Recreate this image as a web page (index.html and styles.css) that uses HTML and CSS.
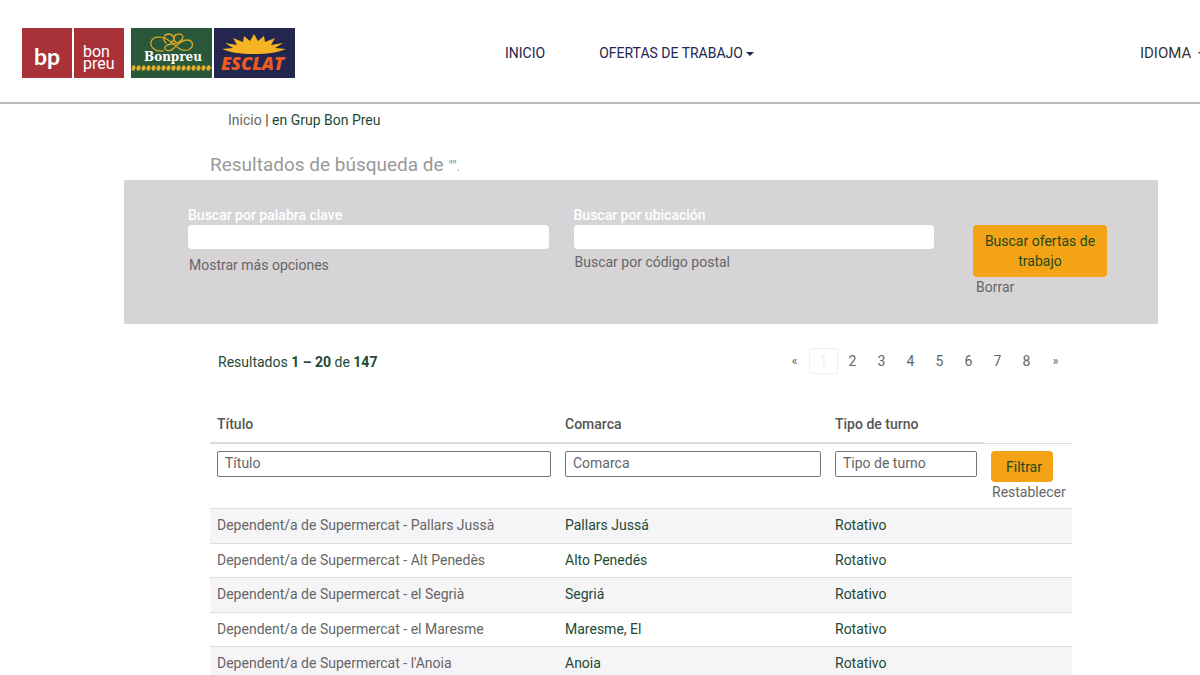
FILE: index.html
```html
<!DOCTYPE html>
<html lang="es">
<head>
<meta charset="utf-8">
<meta name="viewport" content="width=device-width, initial-scale=1">
<title>Ofertas de trabajo - Grup Bon Preu</title>
<link rel="stylesheet" href="styles.css">
</head>
<body>
<header class="site-header">
  <a class="brand" href="#" aria-label="Grup Bon Preu">
    <svg width="274" height="52" viewBox="0 0 274 52" role="img" aria-label="bon preu, Bonpreu, Esclat">
      <rect x="1" y="1" width="50" height="50" fill="#a93239"/>
      <rect x="53" y="1" width="50" height="50" fill="#a93239"/>
      <text class="logo-bp" x="13" y="38">bp</text>
      <text class="logo-name" x="62" y="30">bon</text>
      <text class="logo-name" x="62" y="42">preu</text>
      <rect x="110" y="1" width="81" height="50" fill="#28573a"/>
      <g fill="none" stroke="#d9a429" stroke-width="1.3" stroke-linecap="round">
        <path d="M142 24C134 25 129 20 130 15C132 8 143 9 150 15C156 20 161 25 167 23C174 20 172 13 166 13C160 13 156 18 153 21C150 25 142 24 144 20C146 16 153 18 158 15C165 11 161 6 157 7C152 8 152 14 155 15"/>
        <path d="M145 16C141 12 143 7 148 7C154 8 154 14 150 15"/>
      </g>
      <text class="logo-bonpreu" x="123" y="34">Bonpreu</text>
      <path d="M111 41H191" stroke="#e0a82a" stroke-width="1"/>
      <path d="M113 38.500l-1 5M118 38.500l-1 5M123 38.500l-1 5M128 38.500l-1 5M133 38.500l-1 5M138 38.500l-1 5M143 38.500l-1 5M148 38.500l-1 5M153 38.500l-1 5M158 38.500l-1 5M163 38.500l-1 5M168 38.500l-1 5M173 38.500l-1 5M178 38.500l-1 5M183 38.500l-1 5M188 38.500l-1 5" stroke="#e9b22e" stroke-width="3"/>
      <rect x="193" y="1" width="81" height="50" fill="#23264f"/>
      <path d="M201 22L212 21L204 16L216 18L212 11L222 15L223 9L229 14L233 7L237 14L243 9L244 15L254 11L250 18L262 16L254 21L265 22C258 25 248 27 233 27C218 27 208 25 201 22Z" fill="#f6b323"/>
      <text class="logo-esclat" x="200" y="43">ESCLAT</text>
    </svg>
  </a>
  <nav class="main-nav">
    <a href="#">INICIO</a>
    <a href="#">OFERTAS DE TRABAJO <span class="caret"></span></a>
  </nav>
  <a class="language" href="#">IDIOMA <span class="caret"></span></a>
</header>

<main class="page">
  <div class="intro">
    <p class="breadcrumb"><a href="#">Inicio</a> | en Grup Bon Preu</p>
    <h1 class="title">Resultados de búsqueda de <span class="query">"".</span></h1>
  </div>

  <form class="search">
    <div class="field">
      <label for="keyword">Buscar por palabra clave</label>
      <input id="keyword" type="text">
      <a class="more" href="#">Mostrar más opciones</a>
    </div>
    <div class="field">
      <label for="location">Buscar por ubicación</label>
      <input id="location" type="text">
      <a href="#">Buscar por código postal</a>
    </div>
    <div class="actions">
      <button class="button" type="button">Buscar ofertas de trabajo</button>
      <a href="#">Borrar</a>
    </div>
  </form>

  <section class="results">
    <div class="summary">
      <p class="count">Resultados <b>1 – 20</b> de <b>147</b></p>
      <nav class="pagination" aria-label="Páginas">
        <a class="arrow" href="#">«</a>
        <a class="current" href="#">1</a>
        <a href="#">2</a>
        <a href="#">3</a>
        <a href="#">4</a>
        <a href="#">5</a>
        <a href="#">6</a>
        <a href="#">7</a>
        <a href="#">8</a>
        <a class="arrow" href="#">»</a>
      </nav>
    </div>
    <table class="jobs">
      <colgroup><col class="col-title"><col class="col-region"><col class="col-shift"><col class="col-action"></colgroup>
      <thead>
        <tr class="heads"><th scope="col">Título</th><th scope="col">Comarca</th><th scope="col">Tipo de turno</th><td></td></tr>
        <tr class="filters">
          <td><input type="text" placeholder="Título" aria-label="Título"></td>
          <td><input type="text" placeholder="Comarca" aria-label="Comarca"></td>
          <td><input type="text" placeholder="Tipo de turno" aria-label="Tipo de turno"></td>
          <td><button class="button filter-button" type="button">Filtrar</button><a class="reset" href="#">Restablecer</a></td>
        </tr>
      </thead>
      <tbody>
        <tr><td><a href="#">Dependent/a de Supermercat - Pallars Jussà</a></td><td>Pallars Jussá</td><td>Rotativo</td><td></td></tr>
        <tr><td><a href="#">Dependent/a de Supermercat - Alt Penedès</a></td><td>Alto Penedés</td><td>Rotativo</td><td></td></tr>
        <tr><td><a href="#">Dependent/a de Supermercat - el Segrià</a></td><td>Segriá</td><td>Rotativo</td><td></td></tr>
        <tr><td><a href="#">Dependent/a de Supermercat - el Maresme</a></td><td>Maresme, El</td><td>Rotativo</td><td></td></tr>
        <tr><td><a href="#">Dependent/a de Supermercat - l'Anoia</a></td><td>Anoia</td><td>Rotativo</td><td></td></tr>
      </tbody>
    </table>
  </section>
</main>
</body>
</html>
```

FILE: styles.css
```css
* { box-sizing: border-box; }
body {
  margin: 0;
  background: #fff;
  color: #1c4a35;
  font: 14px/20px Roboto, "Liberation Sans", sans-serif;
  overflow-x: hidden;
}
a { color: #666; text-decoration: none; }
p, h1 { margin: 0; font-weight: 400; }
input, button { font: inherit; }

.site-header {
  display: flex;
  align-items: center;
  height: 104px;
  padding-left: 21px;
  border-bottom: 2px solid #bbb;
  overflow: hidden;
}
.brand { flex: none; height: 52px; margin-top: 4px; }
.brand svg { display: block; }
.main-nav { display: flex; gap: 54px; margin-left: 210px; margin-top: 4px; }
.main-nav a { color: #23264f; white-space: nowrap; }
.language {
  margin: 4px -6px 0 auto;
  color: #333;
  font-size: 15px;
  white-space: nowrap;
}
.caret {
  display: inline-block;
  border: 4px solid transparent;
  border-top-color: currentColor;
  border-bottom: 0;
  vertical-align: middle;
}
.language .caret { margin-left: 3px; }

.logo-bp { font: 700 23px Lato, sans-serif; fill: #fff; }
.logo-name { font: 400 16px Roboto, sans-serif; fill: #fff; }
.logo-bonpreu { font: 700 12px "DejaVu Serif", serif; fill: #fff; }
.logo-esclat { font: italic 800 18px "Open Sans", sans-serif; fill: #ee5a24; }

.page { padding: 0 42px 0 124px; }
.intro { padding: 6px 86px 0; }
.breadcrumb { padding-left: 18px; }
.title { margin-top: 22px; font-size: 19px; line-height: 26px; color: #999; }
.query { font-size: 14px; }

.search {
  display: flex;
  min-height: 144px;
  margin-top: 1px;
  padding: 25px 51px 25px 64px;
  background: #d6d4d7;
}
.field { flex: 1; margin-right: 25px; }
.field + .field { margin-right: 39px; }
.field label { display: block; color: #fff; font-weight: 500; }
.field input {
  display: block;
  width: 100%;
  height: 24px;
  margin-bottom: 3px;
  padding: 0 8px;
  border: 0;
  border-radius: 4px;
  background: #fff;
}
.field a { padding-left: 1px; }
.field .more { display: inline-block; margin-top: 3px; }
.actions { width: 134px; padding-top: 20px; }
.actions a { display: block; padding-left: 3px; }
.button {
  display: block;
  width: 100%;
  padding: 6px 10px;
  border: 0;
  border-radius: 4px;
  background: #f4a216;
  color: #1c4a1c;
}

.results { padding: 24px 86px 0; }
.summary {
  display: flex;
  justify-content: space-between;
  padding: 0 2px 0 8px;
}
.count { padding-top: 4px; }
.count b { font-weight: 700; }
.pagination { display: flex; }
.pagination a {
  min-width: 29px;
  height: 26px;
  border: 1px solid transparent;
  line-height: 24px;
  text-align: center;
}
.pagination .current { border-color: #f3efec; border-radius: 2px; color: #f6eee6; }
.pagination .arrow { font-size: 13px; }

.jobs {
  width: 100%;
  margin-top: 30px;
  border-collapse: separate;
  border-spacing: 0;
  table-layout: fixed;
}
.col-title { width: 348px; }
.col-region { width: 270px; }
.col-shift { width: 156px; }
.jobs th, .jobs td { padding: 7px; text-align: left; vertical-align: top; }
.jobs .heads th {
  padding: 10px 7px 8px;
  border-bottom: 2px solid #ddd;
  color: #555;
  font-weight: 500;
}
.heads td { border-bottom: 1px solid #ddd; }
.jobs .filters td { height: 64px; padding-bottom: 4px; }
.filters input {
  display: block;
  width: 100%;
  height: 26px;
  padding: 0 7px 2px;
  border: 1px solid #767676;
  border-radius: 2px;
}
.filters input::placeholder { color: #666; opacity: 1; }
.filter-button { width: 62px; padding: 5px 8px 5px 12px; height: 31px; }
.reset { padding-left: 1px; }
.jobs .filters td:last-child { padding-right: 0; }
.jobs tbody td { height: 34px; padding: 6px 7px; border-top: 1px solid #ddd; line-height: 21px; }
.jobs tbody tr:nth-child(odd) td { height: 35px; background: #f5f4f6; }
```
